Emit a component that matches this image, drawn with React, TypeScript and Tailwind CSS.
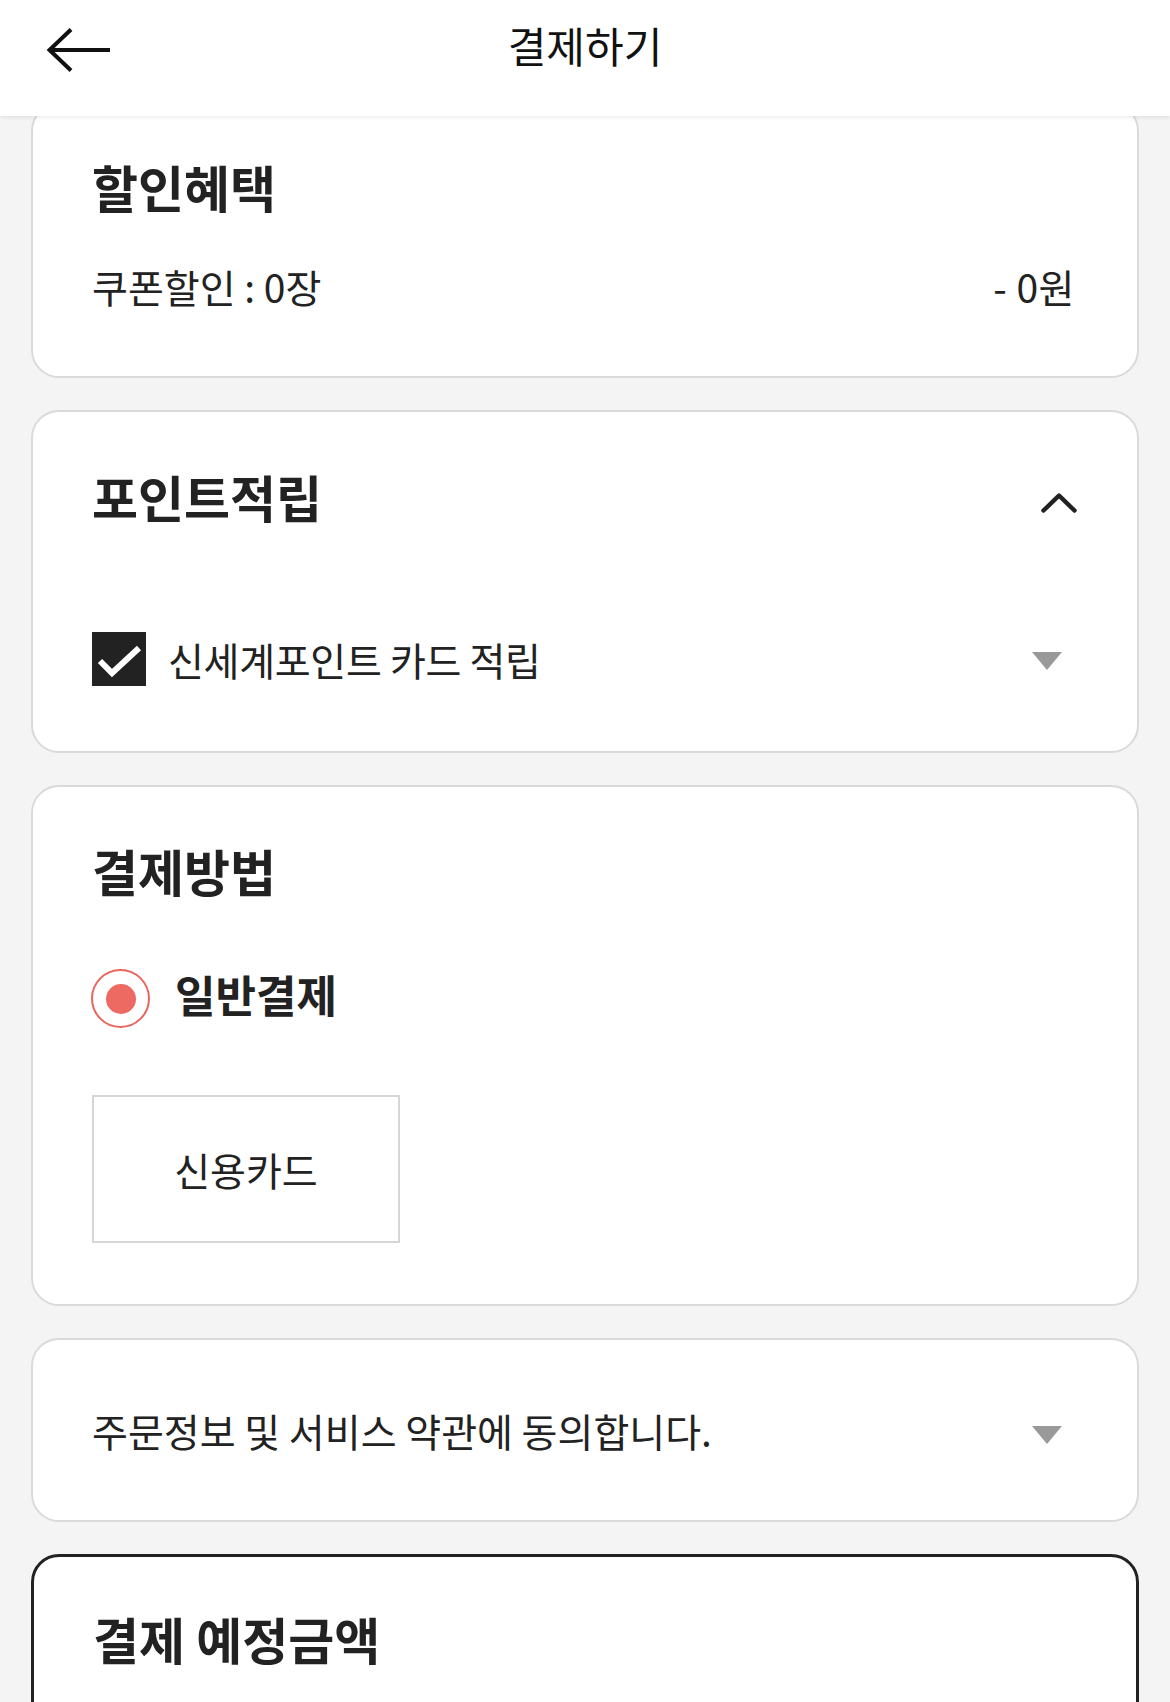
import React from "react";

function Triangle() {
  return (
    <svg width="30" height="18" viewBox="0 0 30 18" className="shrink-0">
      <polygon points="0,0 30,0 15,18" fill="#999999" />
    </svg>
  );
}

export default function App() {
  return (
    <div className="min-h-[1702px] bg-[#f4f4f4] font-['Noto_Sans_CJK_KR','Noto_Sans',sans-serif] text-[#222222]">
      <header className="sticky top-0 z-10 h-[116px] bg-white shadow-[0_2px_4px_rgba(0,0,0,0.07)] grid grid-cols-[1fr_auto_1fr] items-start px-[46px]">
        <div className="mt-[28px]">
          <svg width="64" height="44" viewBox="0 0 64 44" fill="none">
            <path d="M64 22 H4" stroke="#111" strokeWidth="4" />
            <path d="M25 1.5 L3.5 22 L25 42.5" stroke="#111" strokeWidth="4" strokeLinejoin="miter" />
          </svg>
        </div>
        <h1 className="mt-[21px] text-[42px] leading-[48px] font-normal text-[#111]">결제하기</h1>
        <div />
      </header>

      <main className="-mt-[13px] px-[31px] flex flex-col gap-[32px] pb-[40px]">
        {/* 할인혜택 */}
        <section className="h-[275px] rounded-[28px] border-2 border-[#dadada] bg-white px-[59px] pt-[51px]">
          <h2 className="text-[50px] leading-[60px] font-bold">할인혜택</h2>
          <div className="mt-[48px] flex items-center justify-between text-[39px] leading-[44px] pr-[3px]">
            <span>쿠폰할인 : 0장</span>
            <span className="tracking-[0.5px]">- 0원</span>
          </div>
        </section>

        {/* 포인트적립 */}
        <section className="h-[343px] rounded-[28px] border-2 border-[#dadada] bg-white px-[59px] pt-[54px]">
          <div className="flex items-start justify-between">
            <h2 className="text-[50px] leading-[60px] font-bold">포인트적립</h2>
            <svg width="36" height="21" viewBox="0 0 36 21" fill="none" className="mt-[26px] mr-[1px]">
              <path d="M2.5 18.5 L18 3.5 L33.5 18.5" stroke="#222" strokeWidth="4.5" strokeLinecap="round" strokeLinejoin="round" />
            </svg>
          </div>
          <div className="mt-[106px] flex items-center">
            <div className="w-[54px] h-[54px] bg-[#222222] shrink-0 flex items-center justify-center">
              <svg width="54" height="54" viewBox="0 0 54 54" fill="none">
                <path d="M8 29 L20 41 L47 16" stroke="#fff" strokeWidth="6" />
              </svg>
            </div>
            <span className="ml-[22px] text-[39px] leading-[44px] tracking-[-0.3px]">신세계포인트 카드 적립</span>
            <div className="ml-auto mr-[16px] mt-[4px]">
              <Triangle />
            </div>
          </div>
        </section>

        {/* 결제방법 */}
        <section className="h-[521px] rounded-[28px] border-2 border-[#dadada] bg-white px-[59px] pt-[53px]">
          <h2 className="text-[50px] leading-[60px] font-bold">결제방법</h2>
          <div className="mt-[69px] flex items-start">
            <div className="-ml-[1px] w-[59px] h-[59px] rounded-full border-[2.5px] border-[#e8665e] flex items-center justify-center shrink-0">
              <div className="w-[30px] h-[30px] rounded-full bg-[#ec6a62]" />
            </div>
            <span className="ml-[25px] text-[44px] leading-[50px] font-bold">일반결제</span>
          </div>
          <div className="mt-[67px] w-[308px] h-[148px] border-2 border-[#d6d6d6] flex items-center justify-center">
            <span className="text-[39px] leading-[44px]">신용카드</span>
          </div>
        </section>

        {/* 약관 동의 */}
        <section className="h-[184px] rounded-[28px] border-2 border-[#dadada] bg-white px-[59px] flex items-center">
          <span className="text-[39px] leading-[44px]">주문정보 및 서비스 약관에 동의합니다.</span>
          <div className="ml-auto mr-[16px] mt-[10px]">
            <Triangle />
          </div>
        </section>

        {/* 결제 예정금액 */}
        <section className="h-[400px] rounded-[28px] border-[3px] border-[#222222] bg-white px-[59px] pt-[51px]">
          <h2 className="text-[50px] leading-[60px] font-bold">결제 예정금액</h2>
        </section>
      </main>
    </div>
  );
}
